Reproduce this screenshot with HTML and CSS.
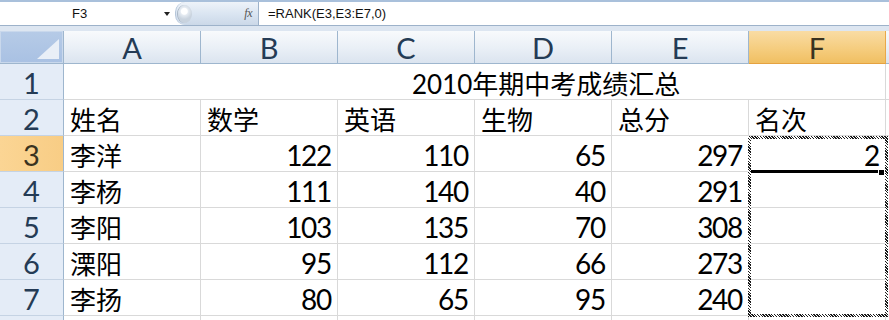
FILE: index.html
```html
<!DOCTYPE html>
<html lang="zh-CN">
<head>
<meta charset="utf-8">
<title>2010年期中考成绩汇总</title>
<link rel="stylesheet" href="styles.css">
</head>
<body>
<div class="app">
  <div class="topline"></div>
  <div class="fbar">
    <div class="namebox"><span class="name">F3</span><span class="caret"></span></div>
    <div class="fxzone"><span class="knob"></span><span class="fx">fx</span></div>
    <div class="formula">=RANK(E3,E3:E7,0)</div>
  </div>
  <div class="band"></div>
  <div class="sheet">
    <div class="corner"><span class="tri"></span></div>
    <div class="colh">A</div><div class="colh">B</div><div class="colh">C</div><div class="colh">D</div><div class="colh">E</div><div class="colh sel">F</div><div class="colh rest"></div>

    <div class="rowh">1</div>
    <div class="c title">2010年期中考成绩汇总</div>
    <div class="c rest"></div>

    <div class="rowh">2</div>
    <div class="c">姓名</div><div class="c">数学</div><div class="c">英语</div><div class="c">生物</div><div class="c">总分</div><div class="c">名次</div><div class="c rest"></div>

    <div class="rowh sel">3</div>
    <div class="c">李洋</div><div class="c r">122</div><div class="c r">110</div><div class="c r">65</div><div class="c r">297</div><div class="c r cur">2<span class="active"><span class="handle"></span></span></div><div class="c rest"></div>

    <div class="rowh">4</div>
    <div class="c">李杨</div><div class="c r">111</div><div class="c r">140</div><div class="c r">40</div><div class="c r">291</div><div class="c r"></div><div class="c rest"></div>

    <div class="rowh">5</div>
    <div class="c">李阳</div><div class="c r">103</div><div class="c r">135</div><div class="c r">70</div><div class="c r">308</div><div class="c r"></div><div class="c rest"></div>

    <div class="rowh">6</div>
    <div class="c">溧阳</div><div class="c r">95</div><div class="c r">112</div><div class="c r">66</div><div class="c r">273</div><div class="c r"></div><div class="c rest"></div>

    <div class="rowh">7</div>
    <div class="c">李扬</div><div class="c r">80</div><div class="c r">65</div><div class="c r">95</div><div class="c r">240</div><div class="c r"></div><div class="c rest"></div>

    <div class="rowh"></div>
    <div class="c"></div><div class="c"></div><div class="c"></div><div class="c"></div><div class="c"></div><div class="c"></div><div class="c rest"></div>

    <div class="ants"></div>
  </div>
</div>
</body>
</html>
```

FILE: styles.css
```css
html, body {
  margin: 0;
  padding: 0;
  background: #ffffff;
  overflow: hidden;
}

.app {
  width: 889px;
  height: 320px;
  overflow: hidden;
  font-family: "Lato", "Noto Sans CJK SC", sans-serif;
}

.topline {
  height: 2px;
  background: #a9c0db;
}

.fbar {
  display: flex;
  height: 23px;
  border-bottom: 1px solid #9db2ca;
  background: #ffffff;
  font-family: "Liberation Sans", Arial, sans-serif;
  font-size: 13px;
  color: #111;
}

.namebox {
  width: 175px;
  display: flex;
  align-items: center;
}

.name {
  margin-left: 72px;
}

.caret {
  margin-left: auto;
  margin-right: 5px;
  width: 0;
  height: 0;
  border-left: 3px solid transparent;
  border-right: 3px solid transparent;
  border-top: 4px solid #222;
}

.fxzone {
  width: 82px;
  display: flex;
  align-items: center;
  background: linear-gradient(#eef3f9, #d9e4f1 55%, #cbd8e8);
  border-left: 1px solid #b6c6d9;
  border-right: 1px solid #9db2ca;
  border-radius: 10px 0 0 10px;
}

.knob {
  width: 14px;
  height: 18px;
  margin-left: 2px;
  border-radius: 50%;
  background: radial-gradient(circle at 45% 35%, #ffffff 0 3px, #e5ebf2 4px, #c9d3de 8px);
  box-shadow: -1px 0 0 #a9b6c4;
}

.fx {
  margin-left: auto;
  margin-right: 6px;
  font-family: "Liberation Serif", serif;
  font-style: italic;
  font-size: 12px;
  color: #555;
  letter-spacing: -0.5px;
}

.formula {
  flex: 1;
  display: flex;
  align-items: center;
  padding-left: 9px;
}

.band {
  height: 5px;
  background: #dde6f1;
}

.sheet {
  position: relative;
  display: grid;
  grid-template-columns: 64px repeat(6, 137px) 1fr;
  grid-template-rows: 33px repeat(8, 36px);
}

.corner {
  background: linear-gradient(#b6cbe7, #a9c1e3);
  border-right: 1px solid #9eb6ce;
  border-bottom: 1px solid #9eb6ce;
  box-shadow: inset 0 0 0 1px #c9d8ec;
  position: relative;
}

.tri {
  position: absolute;
  right: 4px;
  bottom: 4px;
  width: 0;
  height: 0;
  border-left: 22px solid transparent;
  border-bottom: 20px solid #e9eff7;
}

.colh {
  display: flex;
  align-items: center;
  justify-content: center;
  background: linear-gradient(#f8fafc, #e9eff6 55%, #dbe4ef);
  border-right: 1px solid #9eb6ce;
  border-bottom: 1px solid #9eb6ce;
  font-size: 29px;
  color: #243b55;
}

.colh.sel {
  background: linear-gradient(#f9dca4, #f5cd7f 55%, #f0bf62);
  border-right-color: #e9a84a;
  border-bottom-color: #e5a240;
  color: #3a3320;
}

.colh.rest {
  border-right: none;
}

.rowh {
  display: flex;
  align-items: center;
  justify-content: center;
  background: #e4ecf7;
  border-right: 1px solid #9eb6ce;
  border-bottom: 1px solid #c5d3e4;
  font-size: 29px;
  color: #243b55;
  padding-top: 2px;
  box-sizing: border-box;
}

.rowh.sel {
  background: linear-gradient(90deg, #fbd594, #f8cd85);
  color: #3a3320;
}

.c {
  display: flex;
  align-items: center;
  padding: 2px 5px 0 6px;
  border-right: 1px solid #d9d9d9;
  border-bottom: 1px solid #d9d9d9;
  font-size: 26px;
  color: #000;
  white-space: nowrap;
  min-width: 0;
}

.c.r {
  justify-content: flex-end;
  font-size: 28px;
  letter-spacing: -1.3px;
  padding-right: 6px;
}

.c.rest {
  border-right: none;
}

.title {
  grid-column: 2 / 8;
  padding-left: 348px;
}

.cur {
  position: relative;
}

.active {
  position: absolute;
  left: 2px;
  right: 3px;
  bottom: -2px;
  height: 3px;
  background: #000;
  z-index: 2;
}

.handle {
  position: absolute;
  right: -3px;
  top: -1px;
  width: 5px;
  height: 5px;
  background: #000;
  border: 1px solid #fff;
}

.ants {
  position: absolute;
  left: 748px;
  top: 105px;
  width: 134px;
  height: 175px;
  border: 3px solid transparent;
  border-image: repeating-linear-gradient(45deg, #1a1a1a 0 1px, #ffffff 1px 2px) 3;
  z-index: 3;
  pointer-events: none;
}
```
